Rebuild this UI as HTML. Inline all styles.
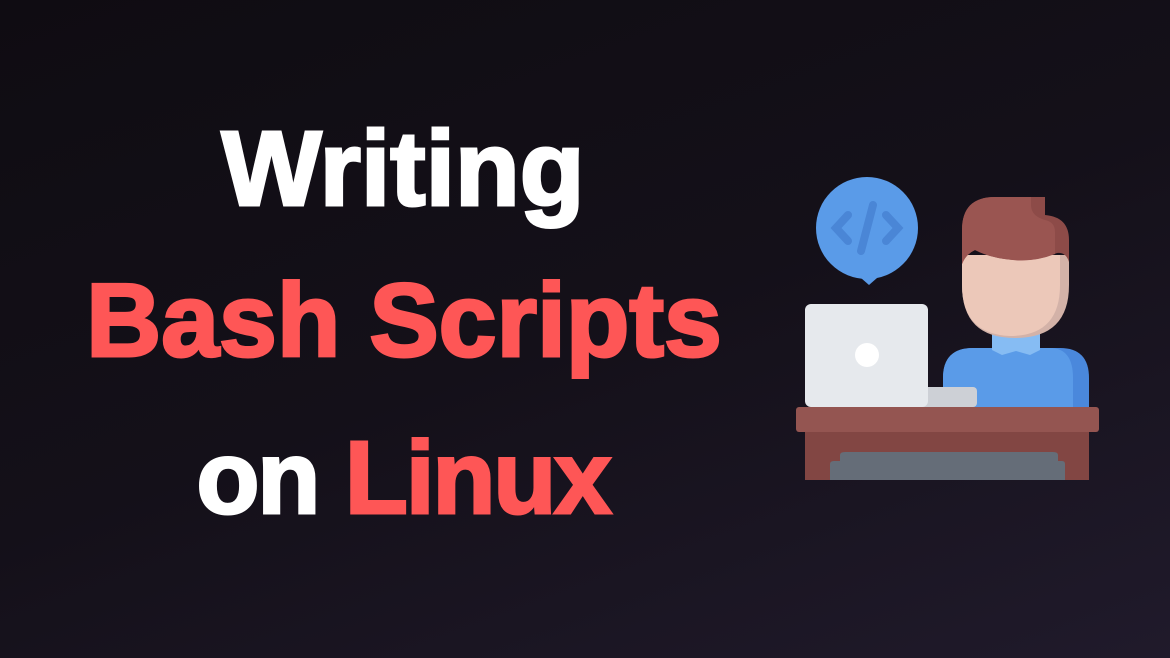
<!DOCTYPE html>
<html><head><meta charset="utf-8"><style>
html,body{margin:0;padding:0}
body{width:1170px;height:658px;overflow:hidden;background:linear-gradient(160deg,#0f0c12 0%,#141019 50%,#201a2b 100%);position:relative;font-family:"Liberation Sans",sans-serif;font-weight:bold}
.l{position:absolute;left:0;width:806px;text-align:center;font-size:106px;line-height:106px;-webkit-text-stroke:3px currentColor;white-space:nowrap}
.w{color:#fff}.r{color:#fe5656}
</style></head><body>
<div class="l w" style="top:116px">Writing</div>
<div class="l r" style="top:268px;font-size:104px;left:1px">Bash Scripts</div>
<div class="l" style="top:425px;letter-spacing:-2px;font-size:103px"><span class="w">on</span> <span class="r">Linux</span></div>
<svg style="position:absolute;left:0;top:0" width="1170" height="658">
<circle cx="867" cy="228" r="51" fill="#5a9be8"/>
<path d="M861 278 L869 285 L877 278Z" fill="#5a9be8"/>
<g stroke="#4a86d6" stroke-width="8" stroke-linecap="round" fill="none">
<path d="M848 215 L836 228 L848 241"/><path d="M886 215 L898 228 L886 241"/><path d="M873 205 L861 251"/></g>
<path d="M943 407 V378 Q943 348 973 348 H1060 Q1089 348 1089 378 V407Z" fill="#4a88dc"/>
<path d="M943 407 V378 Q943 348 973 348 H1050 Q1073 348 1073 378 V407Z" fill="#5a9be8"/>
<path d="M992 330 H1040 V350 L1030 355 L1016 351 L1002 355 L992 350Z" fill="#86bcf3"/>
<path d="M962 255 H1069 V285 Q1069 338 1015 338 Q962 338 962 285Z" fill="#d3b2a8"/>
<path d="M962 255 H1060 V285 Q1060 336 1010 336 Q962 334 962 285Z" fill="#ecc8b9"/>
<path d="M962 264 V230 Q962 197 995 197 H1045 V215 Q1069 217 1069 240 V262 Q1066 252 1057 253 Q1035 262 1013 260 Q990 258 975 250 Q966 254 962 264Z" fill="#8d4b48"/>
<path d="M962 264 V230 Q962 197 995 197 H1031 V205 Q1031 216 1045 220 Q1055 222 1055 232 V254 Q1035 262 1013 260 Q990 258 975 250 Q966 254 962 264Z" fill="#9a5551"/>
<rect x="900" y="387" width="77" height="20" rx="4" fill="#cdd0d6"/>
<rect x="805" y="304" width="123" height="103" rx="6" fill="#e6e9ed"/>
<circle cx="867" cy="355" r="12" fill="#fff"/>
<rect x="805" y="430" width="284" height="50" fill="#824643"/>
<rect x="796" y="407" width="303" height="25" rx="3" fill="#945551"/>
<path d="M830 480 V464 Q830 461 834 461 H840 V455 Q840 452 845 452 H1053 Q1058 452 1058 455 V461 H1062 Q1065 461 1065 464 V480Z" fill="#656d78"/>
</svg>
</body></html>
